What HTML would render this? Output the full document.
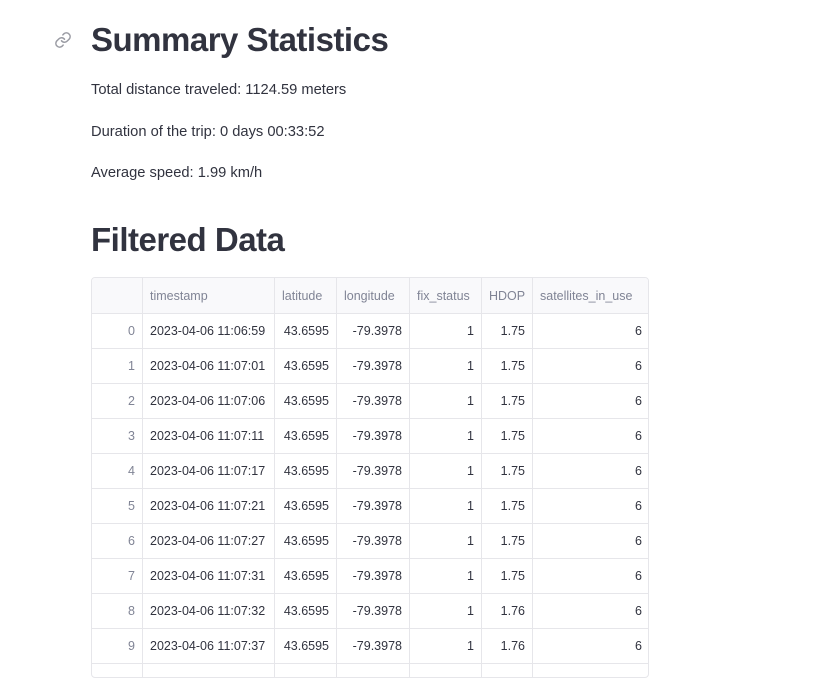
<!DOCTYPE html>
<html><head><meta charset="utf-8"><style>
body{margin:0;width:821px;height:697px;background:#fff;font-family:"Liberation Sans",sans-serif;color:#31333f;position:relative;overflow:hidden}
.h{position:absolute;left:91px;font-weight:bold;font-size:33px;letter-spacing:-0.5px;color:#31333f}
.p{position:absolute;left:91px;font-size:14.7px;color:#31333f}
table{position:absolute;border-collapse:collapse;table-layout:fixed;width:558px;font-size:12.5px;color:#31333f}
td,th{border:1px solid #e6e6ea;padding:0 7px;height:34px;text-align:right;white-space:nowrap;overflow:hidden}
th{font-weight:normal;color:#808495;text-align:left;background:#f9f9fb;height:35px}
td.i{color:#808495}
td.t{text-align:left}
.wrap{position:absolute;left:91px;top:277px;width:556px;height:399px;border:1px solid #e6e6ea;border-radius:4px;overflow:hidden}
.wrap table{left:-1px;top:-1px}
</style></head><body>
<svg style="position:absolute;left:54px;top:31px" width="18" height="18" viewBox="0 0 24 24" fill="none" stroke="#9a9ba3" stroke-width="2" stroke-linecap="round"><path d="M10 13a5 5 0 0 0 7.5.5l3-3a5 5 0 0 0-7-7l-1.7 1.7"/><path d="M14 11a5 5 0 0 0-7.5-.5l-3 3a5 5 0 0 0 7 7l1.7-1.7"/></svg>
<div class="h" style="top:21px">Summary Statistics</div>
<div class="p" style="top:82px">Total distance traveled: 1124.59 meters</div>
<div class="p" style="top:124px">Duration of the trip: 0 days 00:33:52</div>
<div class="p" style="top:165px">Average speed: 1.99 km/h</div>
<div class="h" style="top:221px">Filtered Data</div>
<div class="wrap"><table>
<colgroup><col style="width:51px"><col style="width:132px"><col style="width:62px"><col style="width:73px"><col style="width:72px"><col style="width:51px"><col style="width:117px"></colgroup>
<tr><th></th><th>timestamp</th><th>latitude</th><th>longitude</th><th>fix_status</th><th>HDOP</th><th>satellites_in_use</th></tr>
<tr><td class="i">0</td><td class="t">2023-04-06 11:06:59</td><td>43.6595</td><td>-79.3978</td><td>1</td><td>1.75</td><td>6</td></tr>
<tr><td class="i">1</td><td class="t">2023-04-06 11:07:01</td><td>43.6595</td><td>-79.3978</td><td>1</td><td>1.75</td><td>6</td></tr>
<tr><td class="i">2</td><td class="t">2023-04-06 11:07:06</td><td>43.6595</td><td>-79.3978</td><td>1</td><td>1.75</td><td>6</td></tr>
<tr><td class="i">3</td><td class="t">2023-04-06 11:07:11</td><td>43.6595</td><td>-79.3978</td><td>1</td><td>1.75</td><td>6</td></tr>
<tr><td class="i">4</td><td class="t">2023-04-06 11:07:17</td><td>43.6595</td><td>-79.3978</td><td>1</td><td>1.75</td><td>6</td></tr>
<tr><td class="i">5</td><td class="t">2023-04-06 11:07:21</td><td>43.6595</td><td>-79.3978</td><td>1</td><td>1.75</td><td>6</td></tr>
<tr><td class="i">6</td><td class="t">2023-04-06 11:07:27</td><td>43.6595</td><td>-79.3978</td><td>1</td><td>1.75</td><td>6</td></tr>
<tr><td class="i">7</td><td class="t">2023-04-06 11:07:31</td><td>43.6595</td><td>-79.3978</td><td>1</td><td>1.75</td><td>6</td></tr>
<tr><td class="i">8</td><td class="t">2023-04-06 11:07:32</td><td>43.6595</td><td>-79.3978</td><td>1</td><td>1.76</td><td>6</td></tr>
<tr><td class="i">9</td><td class="t">2023-04-06 11:07:37</td><td>43.6595</td><td>-79.3978</td><td>1</td><td>1.76</td><td>6</td></tr>
<tr><td></td><td></td><td></td><td></td><td></td><td></td><td></td></tr>
</table></div>
</body></html>
